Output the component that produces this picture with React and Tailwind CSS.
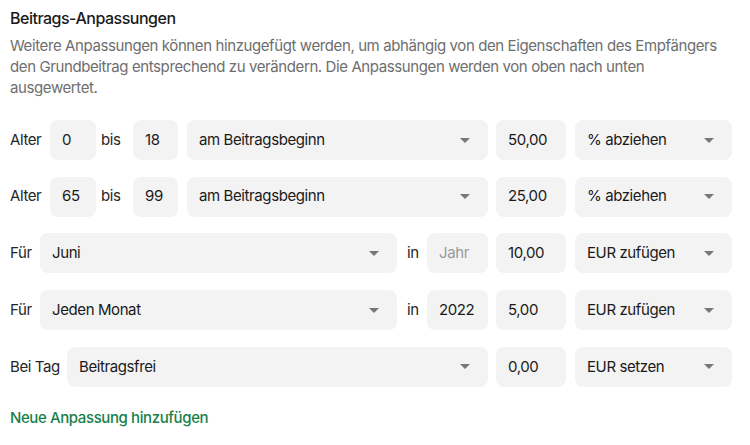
import { useState } from "react";

const font = { fontFamily: "Inter, 'Noto Sans', sans-serif" };

function Chevron() {
  return (
    <svg width="10" height="5" viewBox="0 0 10 5" className="shrink-0">
      <path d="M0 0h10L5 5z" fill="#777777" />
    </svg>
  );
}

function Box({ value, placeholder, className = "" }) {
  return (
    <div className={`h-10 rounded-lg bg-[#f3f3f3] flex items-center px-3 text-[15px] tracking-[-0.4px] ${className}`}>
      {value ? (
        <span className="text-[#1a1a1a]">{value}</span>
      ) : (
        <span className="text-[#9a9a9a]">{placeholder}</span>
      )}
    </div>
  );
}

function Select({ value, className = "" }) {
  return (
    <div className={`h-10 rounded-lg bg-[#f3f3f3] flex items-center justify-between pl-3 pr-[18px] text-[15px] tracking-[-0.4px] text-[#1a1a1a] ${className}`}>
      <span>{value}</span>
      <Chevron />
    </div>
  );
}

function Label({ children, className = "" }) {
  return <span className={`text-[15px] tracking-[-0.4px] text-[#262626] whitespace-nowrap shrink-0 ${className}`}>{children}</span>;
}

export default function App() {
  const [rows] = useState([
    { kind: "age", from: "0", to: "18", when: "am Beitragsbeginn", amount: "50,00", type: "% abziehen" },
    { kind: "age", from: "65", to: "99", when: "am Beitragsbeginn", amount: "25,00", type: "% abziehen" },
    { kind: "month", month: "Juni", year: "", amount: "10,00", type: "EUR zufügen" },
    { kind: "month", month: "Jeden Monat", year: "2022", amount: "5,00", type: "EUR zufügen" },
    { kind: "day", day: "Beitragsfrei", amount: "0,00", type: "EUR setzen" },
  ]);

  return (
    <div className="min-h-screen bg-white pt-[8px] px-[10px]" style={font}>
      <h2 className="text-[16px] leading-[21px] font-medium tracking-[-0.5px] text-[#1a1a1a]">Beitrags-Anpassungen</h2>
      <p className="mt-[6px] text-[15px] leading-[21px] tracking-[-0.4px] text-[#6e6e6e] w-[725px]">
        Weitere Anpassungen können hinzugefügt werden, um abhängig von den Eigenschaften des Empfängers
        den Grundbeitrag entsprechend zu verändern. Die Anpassungen werden von oben nach unten
        ausgewertet.
      </p>

      <div className="mt-[22px] flex flex-col gap-y-[16.7px] w-[722px]">
        {rows.map((row, i) => (
          <div key={i} className="flex items-center">
            {row.kind === "age" && (
              <>
                <Label className="w-[31px]">Alter</Label>
                <Box value={row.from} className="ml-[9px] w-[46px]" />
                <Label className="ml-[5px] w-[22px]">bis</Label>
                <Box value={row.to} className="ml-[10px] w-[45px]" />
                <Select value={row.when} className="ml-[9px] flex-1" />
              </>
            )}
            {row.kind === "month" && (
              <>
                <Label className="w-[25px]">Für</Label>
                <Select value={row.month} className="ml-[5px] flex-1" />
                <Label className="ml-[10px] w-[10px]">in</Label>
                <Box value={row.year} placeholder="Jahr" className="ml-[10px] w-[61px]" />
              </>
            )}
            {row.kind === "day" && (
              <>
                <Label className="w-[48px]">Bei Tag</Label>
                <Select value={row.day} className="ml-[9px] flex-1" />
              </>
            )}
            <Box value={row.amount} className="ml-2 w-[70px]" />
            <Select value={row.type} className="ml-[9px] w-[157px]" />
          </div>
        ))}
      </div>

      <button className="mt-[20px] block text-[15px] leading-[21px] font-medium tracking-[-0.4px] text-[#18804a]">
        Neue Anpassung hinzufügen
      </button>
    </div>
  );
}
